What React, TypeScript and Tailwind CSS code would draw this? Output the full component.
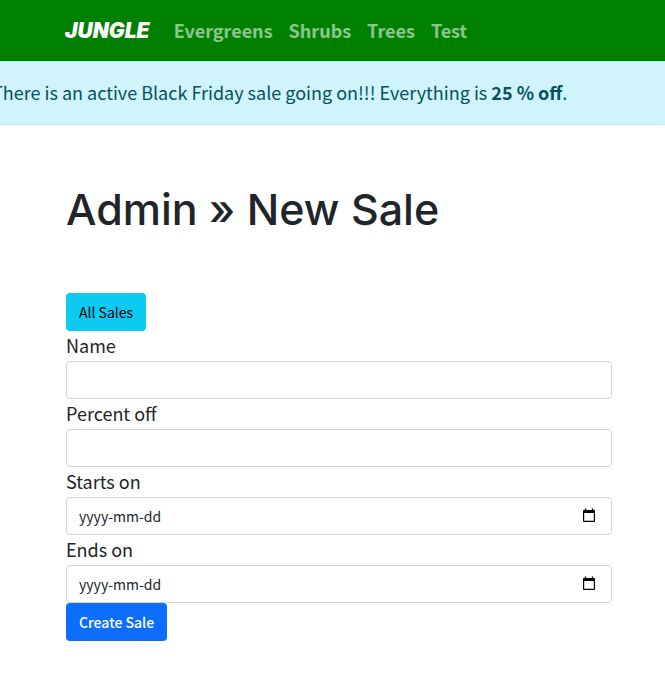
import React from "react";

const links = ["Evergreens", "Shrubs", "Trees", "Test"];

const fields = [
  { id: "name", label: "Name", date: false },
  { id: "percent_off", label: "Percent off", date: false },
  { id: "starts_on", label: "Starts on", date: true },
  { id: "ends_on", label: "Ends on", date: true },
];

function CalendarIcon() {
  return (
    <svg width="14" height="16" viewBox="0 0 14 16" aria-hidden="true">
      <path
        fill="#000"
        fillRule="evenodd"
        d="M2.8 0.5h1.4V2h5.6V0.5h1.4V2H12a1 1 0 0 1 1 1v10a1 1 0 0 1-1 1H2a1 1 0 0 1-1-1V3a1 1 0 0 1 1-1h.8zM2.2 5v7.8h9.6V5z"
      />
    </svg>
  );
}

function Field({ id, label, date }: { id: string; label: string; date: boolean }) {
  return (
    <div>
      <label htmlFor={id} className="block pb-0.5 text-lg leading-7">
        {label}
      </label>
      <div className="flex h-[38px] items-center rounded border border-[#ced4da] bg-white pr-[15px] pl-3">
        <input
          id={id}
          name={id}
          type="text"
          placeholder={date ? "yyyy-mm-dd" : undefined}
          className="h-full min-w-0 flex-1 bg-transparent text-sm outline-none placeholder:text-[#212529]"
        />
        {date && (
          <button type="button" aria-label={"Choose date: " + label}>
            <CalendarIcon />
          </button>
        )}
      </div>
    </div>
  );
}

export default function App() {
  return (
    <div className="overflow-x-hidden bg-white font-['Noto_Sans_CJK_SC',sans-serif] text-[#212529]">
      <nav className="flex h-[61px] items-center bg-[#008000] pl-[65px]">
        <a
          href="#"
          className="mr-6 font-[Inter,sans-serif] text-[21px] leading-7 font-black text-white italic"
        >
          JUNGLE
        </a>
        <div className="flex gap-4 pb-0.5">
          {links.map((l) => (
            <a key={l} href="#" className="text-lg leading-7 font-bold text-white/55">
              {l}
            </a>
          ))}
        </div>
      </nav>
      <div
        role="alert"
        className="border-y border-[#b6effb] bg-[#cff4fc] py-4 whitespace-nowrap text-[#055160]"
      >
        <p className="-ml-2 pb-0.5 text-lg leading-7">
          There is an active Black Friday sale going on!!! Everything is{" "}
          <strong className="font-bold">25 % off</strong>.
        </p>
      </div>
      <main className="pt-[60px] pr-[53px] pb-8 pl-[66px]">
        <h1 className="mb-[60px] font-[Inter,sans-serif] text-[43px] leading-[48px] font-medium">
          Admin » New Sale
        </h1>
        <a
          href="#"
          className="inline-flex h-[38px] items-center rounded bg-[#0dcaf0] px-[13px] align-top text-sm text-black"
        >
          All Sales
        </a>
        <form onSubmit={(e) => e.preventDefault()}>
          {fields.map((f) => (
            <Field key={f.id} {...f} />
          ))}
          <button
            type="submit"
            className="flex h-[38px] items-center rounded bg-[#0d6efd] px-[13px] text-sm font-medium text-white"
          >
            Create Sale
          </button>
        </form>
      </main>
    </div>
  );
}
